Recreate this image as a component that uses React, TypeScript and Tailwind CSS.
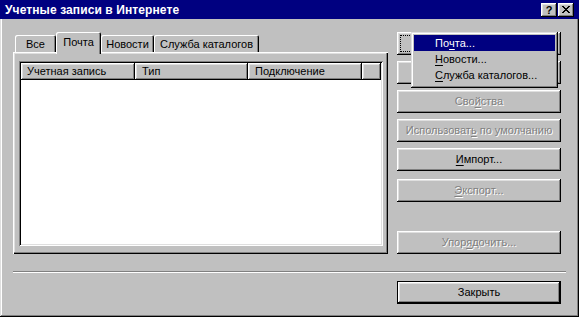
import React from "react";

const raised =
  "shadow-[inset_-1px_-1px_0_#000,inset_1px_1px_0_#fff,inset_-2px_-2px_0_#808080,inset_2px_2px_0_#dfdfdf]";

function Btn({
  children,
  disabled,
  focus,
}: {
  children?: React.ReactNode;
  disabled?: boolean;
  focus?: boolean;
}) {
  return (
    <div
      className={`relative w-[164px] h-[23px] flex items-center justify-center bg-[#c0c0c0] shadow-[inset_-1px_-1px_0_#000,inset_1px_1px_0_#fff,inset_-2px_-2px_0_#808080,inset_2px_2px_0_#dfdfdf] ${
        disabled ? "text-[#808080] [text-shadow:1px_1px_0_#fff]" : "text-black"
      }`}
    >
      {focus && (
        <span className="absolute left-[3px] top-[3px] right-[3px] bottom-[3px] border border-dotted border-black" />
      )}
      {children && <span>{children}</span>}
    </div>
  );
}

function U({ children }: { children: React.ReactNode }) {
  return <span className="underline underline-offset-[2px]">{children}</span>;
}

export default function App() {
  return (
    <div className="relative w-[579px] h-[317px] overflow-hidden bg-[#c0c0c0] font-['Liberation_Sans',Arial,sans-serif] text-[11px] leading-none text-black shadow-[inset_-1px_-1px_0_#000,inset_1px_1px_0_#dfdfdf,inset_-2px_-2px_0_#808080,inset_2px_2px_0_#fff]">
      {/* Title bar */}
      <div className="h-[19px] bg-[#000080] flex items-center pl-[5px] pr-[5px]">
        <span className="text-white font-bold text-[12px] tracking-[0.1px]">
          Учетные записи в Интернете
        </span>
        <div className="ml-auto flex">
          <div className={`w-[16px] h-[14px] bg-[#c0c0c0] flex items-center justify-center ${raised}`}>
            <span className="font-bold text-[11px] leading-none mt-[1px]">?</span>
          </div>
          <div className={`ml-[1px] w-[16px] h-[14px] bg-[#c0c0c0] flex items-center justify-center ${raised}`}>
            <svg width="8" height="7" viewBox="0 0 8 7" className="mt-[-1px]">
              <path d="M0 0h2v1h1v1h2V1h1V0h2v1H7v1H6v1H5v1h1v1h1v1h1v1H6V6H5V5H3v1H2v1H0V6h1V5h1V4h1V3H2V2H1V1H0z" fill="#000" />
            </svg>
          </div>
        </div>
      </div>

      <div className="flex items-start pl-[13px] pt-[13px]">
        {/* Left: tabs + panel */}
        <div className="w-[375px] flex flex-col">
          <div className="relative z-10 h-[20px] flex items-end pl-[2px]">
            <div className="w-[41px] h-[17px] rounded-t-[2px] flex items-center justify-center pt-[1px] shadow-[inset_1px_1px_0_#fff,inset_-1px_0_0_#000,inset_-2px_0_0_#808080]">
              Все
            </div>
            <div className="w-[45px] h-[22px] mb-[-2px] rounded-t-[2px] bg-[#c0c0c0] flex items-start justify-center pt-[5px] shadow-[inset_1px_1px_0_#fff,inset_-1px_0_0_#000,inset_-2px_0_0_#808080]">
              Почта
            </div>
            <div className="w-[53px] h-[17px] rounded-t-[2px] flex items-center justify-center pt-[1px] shadow-[inset_1px_1px_0_#fff,inset_-1px_0_0_#000,inset_-2px_0_0_#808080]">
              Новости
            </div>
            <div className="w-[105px] h-[17px] rounded-t-[2px] flex items-center justify-center pt-[1px] shadow-[inset_1px_1px_0_#fff,inset_-1px_0_0_#000,inset_-2px_0_0_#808080]">
              Служба каталогов
            </div>
          </div>
          <div className="h-[202px] pt-[9px] pl-[6px] shadow-[inset_1px_1px_0_#fff,inset_-1px_-1px_0_#000,inset_-2px_-2px_0_#808080,inset_2px_2px_0_#dfdfdf]">
            <div className="w-[364px] h-[185px] bg-white p-[2px] shadow-[inset_1px_1px_0_#808080,inset_-1px_-1px_0_#fff,inset_2px_2px_0_#000,inset_-2px_-2px_0_#dfdfdf]">
              <div className="flex h-[17px] bg-[#c0c0c0]">
                <div className={`w-[114px] flex items-center pl-[6px] ${raised}`}>Учетная запись</div>
                <div className={`w-[113px] flex items-center pl-[7px] ${raised}`}>Тип</div>
                <div className={`w-[114px] flex items-center pl-[7px] ${raised}`}>Подключение</div>
                <div className={`flex-1 ${raised}`} />
              </div>
            </div>
          </div>
        </div>

        {/* Right: buttons */}
        <div className="ml-[9px] flex flex-col">
          <Btn focus />
          <div className="mt-[6px]">
            <Btn />
          </div>
          <div className="mt-[6px]">
            <Btn disabled>
              Сво<U>й</U>ства
            </Btn>
          </div>
          <div className="mt-[6px]">
            <Btn disabled>
              Использоват<U>ь</U> по умолчанию
            </Btn>
          </div>
          <div className="mt-[6px]">
            <Btn>
              <U>И</U>мпорт...
            </Btn>
          </div>
          <div className="mt-[8px]">
            <Btn disabled>
              <U>Э</U>кспорт...
            </Btn>
          </div>
          <div className="mt-[29px]">
            <Btn disabled>
              Упор<U>я</U>дочить...
            </Btn>
          </div>
        </div>
      </div>

      {/* Separator */}
      <div className="ml-[13px] mt-[17px] w-[553px] h-[2px] border-t border-[#808080] border-b border-b-white" />

      {/* Close */}
      <div className="mt-[8px] flex justify-end pr-[18px]">
        <div className="w-[164px] h-[23px] border border-black">
          <div className={`w-full h-full flex items-center justify-center ${raised}`}>Закрыть</div>
        </div>
      </div>

      {/* Popup menu */}
      <div className="absolute left-[411px] top-[32px] w-[147px] h-[56px] bg-[#c0c0c0] p-[3px] shadow-[inset_-1px_-1px_0_#000,inset_1px_1px_0_#dfdfdf,inset_-2px_-2px_0_#808080,inset_2px_2px_0_#fff]">
        <div className="h-[16px] bg-[#000080] text-white flex items-center pl-[21px]">
          По<U>ч</U>та...
        </div>
        <div className="h-[16px] flex items-center pl-[21px]">
          <U>Н</U>овости...
        </div>
        <div className="h-[16px] flex items-center pl-[21px]">
          <U>С</U>лужба каталогов...
        </div>
      </div>
    </div>
  );
}
